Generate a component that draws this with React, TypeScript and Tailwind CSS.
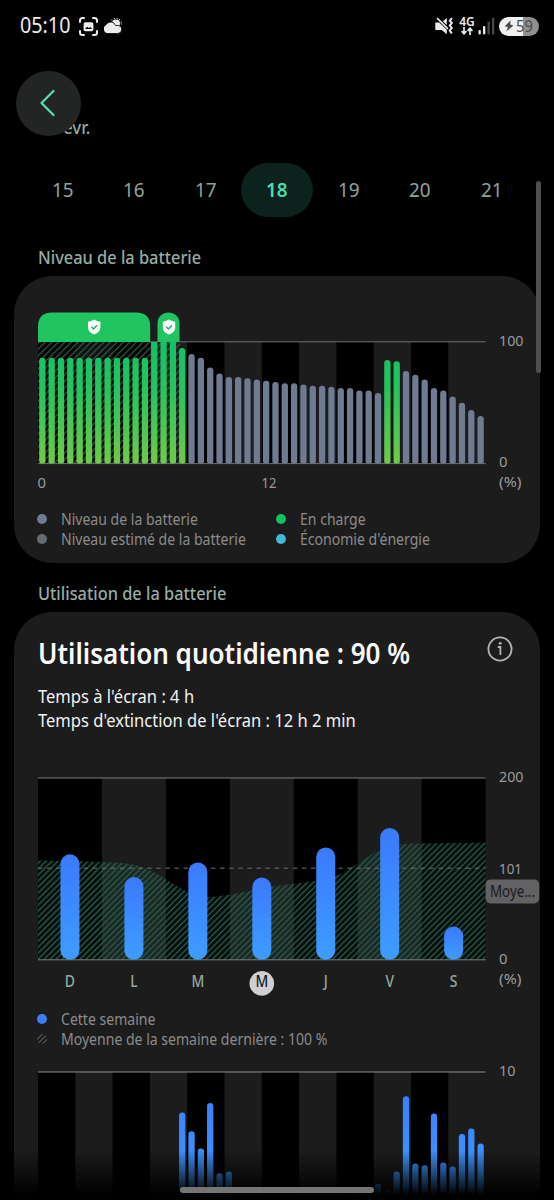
import { clsx } from 'clsx'

type Bar = { slot: number; value: number }

const DAYS = [15, 16, 17, 18, 19, 20, 21]
const SELECTED_DAY = 18

// Battery level for every half hour of the day
const LEVELS = [
  87, 87, 87, 87, 87, 87, 87, 87, 87, 87, 87, 87, 100, 100, 100, 95,
  90, 87, 79, 74, 71, 71, 70, 69, 68, 67, 66, 66, 65, 64, 64, 63,
  62, 62, 60, 60, 58, 85, 84, 76, 73, 69, 62, 60, 55, 50, 44, 39,
]
const isCharging = (slot: number) => slot < 16 || slot === 37 || slot === 38

const WEEK = [
  { label: 'D', value: 116 },
  { label: 'L', value: 91 },
  { label: 'M', value: 107 },
  { label: 'M', value: 90.5, selected: true },
  { label: 'J', value: 123.5 },
  { label: 'V', value: 145 },
  { label: 'S', value: 36.5 },
]

const USAGE: Bar[] = [
  { slot: 15, value: 6.66 },
  { slot: 16, value: 5.12 },
  { slot: 17, value: 3.7 },
  { slot: 18, value: 7.46 },
  { slot: 19, value: 1.67 },
  { slot: 20, value: 1.81 },
  { slot: 34, value: 0.57 },
  { slot: 36, value: 0.82 },
  { slot: 37, value: 0.25 },
  { slot: 38, value: 1.81 },
  { slot: 39, value: 8 },
  { slot: 40, value: 2.47 },
  { slot: 41, value: 2.33 },
  { slot: 42, value: 6.58 },
  { slot: 43, value: 2.55 },
  { slot: 44, value: 2.22 },
  { slot: 45, value: 4.91 },
  { slot: 46, value: 5.35 },
  { slot: 47, value: 4.11 },
]

const CHART_W = 447.6
const SLOT_W = CHART_W / 48
const slotX = (slot: number) => slot * SLOT_W + 1.2

const Stripes = ({ count, height }: { count: number; height: number }) => (
  <>
    {Array.from({ length: Math.ceil(count / 2) }, (_, i) => (
      <rect key={i} x={(i * 2 * CHART_W) / count} y={0} width={CHART_W / count} height={height} fill="#000" />
    ))}
  </>
)

type AxisTextProps = { x: number; y: number; width: number; children: string; fill?: string; size?: number }

const AxisText = ({ x, y, width, children, fill = '#9a9a9c', size = 15 }: AxisTextProps) => (
  <text x={x} y={y} fontSize={size} fill={fill} textLength={width} lengthAdjust="spacingAndGlyphs">
    {children}
  </text>
)

const Shield = ({ x }: { x: number }) => (
  <g transform={`translate(${x} -22.4)`}>
    <path d="M0 0 Q3 2 6.2 2.2 V7.8 Q6 12.6 0 15 Q-6 12.6 -6.2 7.8 V2.2 Q-3 2 0 0Z" fill="#fff" />
    <path d="M-2.8 7.2 L-0.7 9.3 L3 5.6" fill="none" stroke="#1fae5a" strokeWidth="1.4" />
  </g>
)

const LevelChart = () => (
  <svg className="block overflow-visible" width="502" height="190" viewBox="0 -30 502 190">
    <defs>
      <linearGradient id="charge" gradientUnits="userSpaceOnUse" x1="0" y1="0" x2="0" y2="121.6">
        <stop offset="0" stopColor="#12c265" />
        <stop offset="0.4" stopColor="#27c45c" />
        <stop offset="1" stopColor="#70ca48" />
      </linearGradient>
      <pattern id="chargeHatch" width="4.6" height="4.6" patternUnits="userSpaceOnUse" patternTransform="rotate(45)">
        <rect width="1.3" height="4.6" fill="#2c5a47" />
      </pattern>
    </defs>
    <Stripes count={12} height={121.6} />
    <rect width="112.2" height="121.6" fill="#000" opacity="0.4" />
    <rect width="142" height="121.6" fill="url(#chargeHatch)" />
    <path d="M0 0V-15.6Q0 -29.6 14 -29.6H98.2Q112.2 -29.6 112.2 -15.6V0Z" fill="#20c460" />
    <path d="M119.5 0V-18.6A11 11 0 0 1 141.5 -18.6V0Z" fill="#20c460" />
    <Shield x={56.2} />
    <Shield x={131} />
    <path d={`M112.2 -0.2H119.5M141.5 -0.2H${CHART_W}`} stroke="#707072" />
    <path d={`M0 121.6H${CHART_W}`} stroke="#707072" />
    {LEVELS.map((value, slot) => {
      const h = value * 1.216
      return (
        <path
          key={slot}
          d={
            value === 100
              ? `M${slotX(slot)} 0h6.3V119.6q0 2 -2 2h-2.3q-2 0 -2 -2Z`
              : `M${slotX(slot)} ${124.6 - h}a3.15 3.15 0 0 1 6.3 0V119.6q0 2 -2 2h-2.3q-2 0 -2 -2Z`
          }
          fill={isCharging(slot) ? 'url(#charge)' : '#6e7b92'}
        />
      )
    })}
    <AxisText x={461} y={4.2} width={24.5}>100</AxisText>
    <AxisText x={461} y={125.2} width={8.5}>0</AxisText>
    <AxisText x={461} y={145} width={22.5}>(%)</AxisText>
    <AxisText x={-0.5} y={146} width={8.5}>0</AxisText>
    <AxisText x={223.5} y={146} width={15}>12</AxisText>
  </svg>
)

// Last week's average, as a smooth area
const AREA =
  'M0 82.5C20 82.6 32 83 48 83.4C70 84 85 84 99 87.5C120 93 135 108 152 115C162 119 168 119.5 180 118.4C200 116 215 112 226 110C250 106 275 104 288 101C305 97 315 88 330 79C340 72 345 67 360 66.2C385 65.4 420 65.3 447.6 64.6V181.8H0Z'

const WeekChart = () => {
  const col = CHART_W / WEEK.length
  return (
    <svg className="block overflow-visible" width="502" height="225" viewBox="0 0 502 225">
      <defs>
        <linearGradient id="week" x1="0" y1="0" x2="0" y2="1">
          <stop offset="0" stopColor="#3a7afc" />
          <stop offset="1" stopColor="#3d9dff" />
        </linearGradient>
        <pattern id="avgHatch" width="4.25" height="4.25" patternUnits="userSpaceOnUse" patternTransform="rotate(45)">
          <rect width="1.3" height="4.25" fill="#245c4b" />
        </pattern>
      </defs>
      <Stripes count={7} height={181.8} />
      <path d={AREA} fill="#2f8068" opacity="0.1" />
      <path d={AREA} fill="url(#avgHatch)" />
      <path d={`M0 90.2H${CHART_W}`} stroke="#6d7274" strokeDasharray="4.5 4.6" />
      <path d={`M0 0H${CHART_W}M0 181.8H${CHART_W}`} stroke="#7b7f7f" />
      {WEEK.map((day, i) => {
        const cx = col * (i + 0.5)
        const h = day.value * 0.909
        return (
          <g key={i}>
            <rect x={cx - 9.5} y={181.8 - h} width="19" height={h} rx="9.5" fill="url(#week)" />
            {day.selected && <circle cx={cx} cy="205.4" r="12.3" fill="#cfcfd1" />}
            <text
              transform={`translate(${cx} 209) scale(0.9 1)`}
              fontSize="15.5"
              textAnchor="middle"
              fill={day.selected ? '#1c1c1c' : '#93a9a2'}
              className="font-medium"
            >
              {day.label}
            </text>
          </g>
        )
      })}
      <AxisText x={461} y={4.1} width={24.5}>200</AxisText>
      <AxisText x={461} y={95.5} width={23}>101</AxisText>
      <AxisText x={461} y={185.6} width={8.5}>0</AxisText>
      <AxisText x={461} y={205.6} width={22.5}>(%)</AxisText>
      <rect x="447.6" y="101.4" width="53.6" height="24" rx="5" fill="#626265" />
      <AxisText x={452} y={118.6} width={45} size={15.5} fill="#1b1b1c">Moye...</AxisText>
    </svg>
  )
}

const UsageChart = () => (
  <svg className="block overflow-visible" width="502" height="130" viewBox="0 0 502 130">
    <defs>
      <linearGradient id="usage" gradientUnits="userSpaceOnUse" x1="0" y1="0" x2="0" y2="121.6">
        <stop offset="0" stopColor="#3d76fb" />
        <stop offset="1" stopColor="#3d9dff" />
      </linearGradient>
    </defs>
    <Stripes count={12} height={130} />
    <path d={`M0 0H${CHART_W}`} stroke="#8a8a8c" />
    {USAGE.map(({ slot, value }) => (
      <rect key={slot} x={slotX(slot)} y={121.6 - value * 12.16} width="6.3" height={value * 12.16 + 6} rx="3.1" fill="url(#usage)" />
    ))}
    <AxisText x={461} y={4.4} width={16.5}>10</AxisText>
  </svg>
)

const Legend = ({ color, children }: { color: string; children: string }) => (
  <div className="flex h-5 items-center gap-[13px]">
    <span className={clsx('-ml-px -mt-0.5 size-[10px] shrink-0 rounded-full', color)} />
    <span className="ml-px origin-left scale-x-[0.906] whitespace-nowrap text-[15.5px] text-[#8b8b8d]">{children}</span>
  </div>
)

const StatusBar = () => (
  <header className="flex h-[52px] shrink-0 items-center justify-between pl-5 pr-[15px] text-[#ececec]">
    <div className="flex items-center">
      <span className="w-[59px] origin-left scale-x-[0.94] whitespace-nowrap text-[21px]">05:10</span>
      <svg width="19" height="19" viewBox="0 0 19 19" fill="none" stroke="currentColor" strokeWidth="2" strokeLinecap="round">
        <path d="M1 5V3.5Q1 1 3.5 1H5M14 1h1.5Q18 1 18 3.5V5M18 14v1.5Q18 18 15.5 18H14M5 18H3.5Q1 18 1 15.5V14" />
        <rect x="4.6" y="5.2" width="9.8" height="9" rx="1.8" fill="currentColor" stroke="none" />
        <path d="M6 12L8.2 9.8L9.8 11L11.2 9.9L13 12Z" fill="#000" stroke="none" />
      </svg>
      <svg className="ml-1.5" width="18" height="16" viewBox="0 0 18 16">
        <circle cx="12" cy="5.5" r="4" fill="currentColor" />
        <circle cx="12" cy="5.5" r="5.3" fill="none" stroke="currentColor" strokeWidth="1.1" strokeDasharray="1 1.77" />
        <path
          d="M4.6 15.5A4.6 4.6 0 0 1 2 6.8Q3.8 3.6 7.4 4Q10.7 4.6 11.6 7.6Q17.5 6.6 17.7 11.5Q17.5 15.5 13.5 15.5Z"
          fill="currentColor"
          stroke="#000"
          strokeWidth="0.8"
        />
      </svg>
    </div>
    <div className="flex items-center">
      <svg width="19" height="18" viewBox="0 0 19 18" fill="none" stroke="currentColor">
        <path d="M0.3 5.4H4.2L11.8 12.8V17.2L6.8 13H0.3ZM11.8 1V8L7.8 4.2Z" fill="currentColor" stroke="none" />
        <path d="M2 1L13 11.8" strokeWidth="1.7" />
        <path d="M16.8 1L14.8 3.6L16.8 6L14.8 8.5L16.8 11L14.8 13.5L16.8 16.5" strokeWidth="2" />
      </svg>
      <div className="ml-1 flex w-[18px] flex-col items-center">
        <span className="text-[12px] font-semibold leading-[10px]">4G</span>
        <svg width="12" height="8" viewBox="0 0 12 8" fill="none" stroke="currentColor" strokeWidth="1.7">
          <path d="M3 0V7M0.6 4.2L3 6.8L5.4 4.2M9 8V1M6.6 3.8L9 1.2L11.4 3.8" />
        </svg>
      </div>
      <svg className="ml-0.5" width="17" height="18" viewBox="0 0 17 18" fill="currentColor">
        <rect x="0.5" y="13" width="2.3" height="4.5" rx="1" />
        <rect x="5" y="9" width="2.3" height="8.5" rx="1" />
        <rect x="9.5" y="4.5" width="2.3" height="13" rx="1" fill="#4a4a4a" />
        <rect x="14" y="0.5" width="2.3" height="17" rx="1" fill="#4a4a4a" />
      </svg>
      <div className="ml-1 flex h-[19px] w-10 items-center rounded-full bg-linear-to-r from-[#f0f0f0] from-59% to-[#909090] to-59% pl-[5px] text-[#4a4a4a]">
        <svg width="10" height="12" viewBox="0 0 10 12" fill="currentColor">
          <path d="M6.5 0.5L0.8 6.3L4 7.3L2.2 11.5L9.5 5.6L6.2 4.6Z" />
        </svg>
        <span className="ml-0.5 origin-left scale-x-[0.92] text-[16px] leading-none">59</span>
      </div>
    </div>
  </header>
)

const SectionTitle = ({ children }: { children: string }) => (
  <h2 className="flex h-[38px] items-center pl-[38px] text-[18px] font-medium text-[#97aca5]">
    <span className="origin-left scale-x-[0.91] whitespace-nowrap">{children}</span>
  </h2>
)

export default function App() {
  return (
    <div className="relative flex h-[1200px] w-[554px] flex-col overflow-hidden bg-black font-['Noto_Sans',sans-serif]">
      <StatusBar />

      <main className="flex flex-col">
        <div className="flex h-[87px] items-end pl-[54px]">
          <span className="origin-left scale-x-[0.94] text-[18px] font-medium leading-6 text-[#97aca5]">Févr.</span>
        </div>

        <nav className="mx-[26.5px] mt-6 grid h-[54px] grid-cols-7">
          {DAYS.map((day) => (
            <button
              key={day}
              type="button"
              className={clsx(
                'flex items-center justify-center rounded-[27px] text-[20.5px]',
                day === SELECTED_DAY ? 'bg-[#0b231c] font-semibold text-[#4fdcae]' : 'text-[#93a29d]',
              )}
            >
              <span className="-mt-0.5 scale-x-[0.92]">{day}</span>
            </button>
          ))}
        </nav>

        <div className="mt-[21px]">
          <SectionTitle>Niveau de la batterie</SectionTitle>
        </div>

        <section className="ml-[13.5px] flex h-[287px] w-[526.5px] flex-col rounded-[38px] bg-[#1c1c1c] pl-[24.5px] pt-[35.5px]">
          <LevelChart />
          <div className="mt-[8.5px] grid grid-cols-[239px_1fr]">
            <Legend color="bg-[#6e7b92]">Niveau de la batterie</Legend>
            <Legend color="bg-[#0fc25f]">En charge</Legend>
            <Legend color="bg-[#666c72]">Niveau estimé de la batterie</Legend>
            <Legend color="bg-[#3fbbd8]">Économie d'énergie</Legend>
          </div>
        </section>

        <div className="mt-[11px]">
          <SectionTitle>Utilisation de la batterie</SectionTitle>
        </div>

        <section className="ml-[13.5px] flex h-[640px] w-[526.5px] flex-col rounded-t-[38px] bg-[#1c1c1c] pl-[24.5px] pt-[22px]">
          <div className="flex h-[38px] items-center justify-between pr-[27px]">
            <h1 className="origin-left scale-x-[0.898] whitespace-nowrap text-[29px] font-semibold text-[#fafafa]">
              Utilisation quotidienne : 90 %
            </h1>
            <svg className="-mt-2 shrink-0" width="26" height="26" viewBox="0 0 26 26" fill="none" stroke="#b4b4b6" strokeWidth="1.8">
              <circle cx="13" cy="13" r="11.6" />
              <path d="M10.8 11H13.4V19" />
              <circle cx="13.2" cy="7.3" r="1.4" fill="#b4b4b6" stroke="none" />
            </svg>
          </div>
          <div className="mt-3 flex flex-col text-[18px] leading-6 text-[#f2f2f2]">
            <span className="origin-left scale-x-[0.919] whitespace-nowrap">Temps à l'écran : 4 h</span>
            <span className="origin-left scale-x-[0.919] whitespace-nowrap">Temps d'extinction de l'écran : 12 h 2 min</span>
          </div>

          <div className="mt-[46px]">
            <WeekChart />
          </div>
          <div className="mt-[7px] flex flex-col">
            <Legend color="bg-[#3d7dfb]">Cette semaine</Legend>
            <Legend color="bg-[repeating-linear-gradient(135deg,#4c4c4c_0_1.3px,#1c1c1c_1.3px_3.5px)]">
              Moyenne de la semaine dernière : 100 %
            </Legend>
          </div>
          <div className="mt-[22px]">
            <UsageChart />
          </div>
        </section>
      </main>

      {/* Floating back button */}
      <button
        type="button"
        aria-label="Retour"
        className="absolute left-4 top-[71px] flex size-[65px] items-center justify-center rounded-full bg-[#232424]"
      >
        <svg className="-ml-0.5 -mt-px" width="16" height="28" viewBox="0 0 16 28" fill="none" stroke="#55dfb2" strokeWidth="2.2" strokeLinecap="round" strokeLinejoin="round">
          <path d="M13.5 2L1.5 14L13.5 26" />
        </svg>
      </button>

      {/* Scroll bar, bottom fade and gesture handle */}
      <div className="absolute left-[536px] top-[181px] h-[192px] w-[5px] rounded-full bg-[#4d4d4f]" />
      <div className="absolute inset-x-0 bottom-0 h-[50px] bg-linear-to-b from-transparent to-black to-90%" />
      <div className="absolute left-[180px] top-[1187px] h-[5.5px] w-[193.5px] rounded-full bg-[#757575]" />
    </div>
  )
}
